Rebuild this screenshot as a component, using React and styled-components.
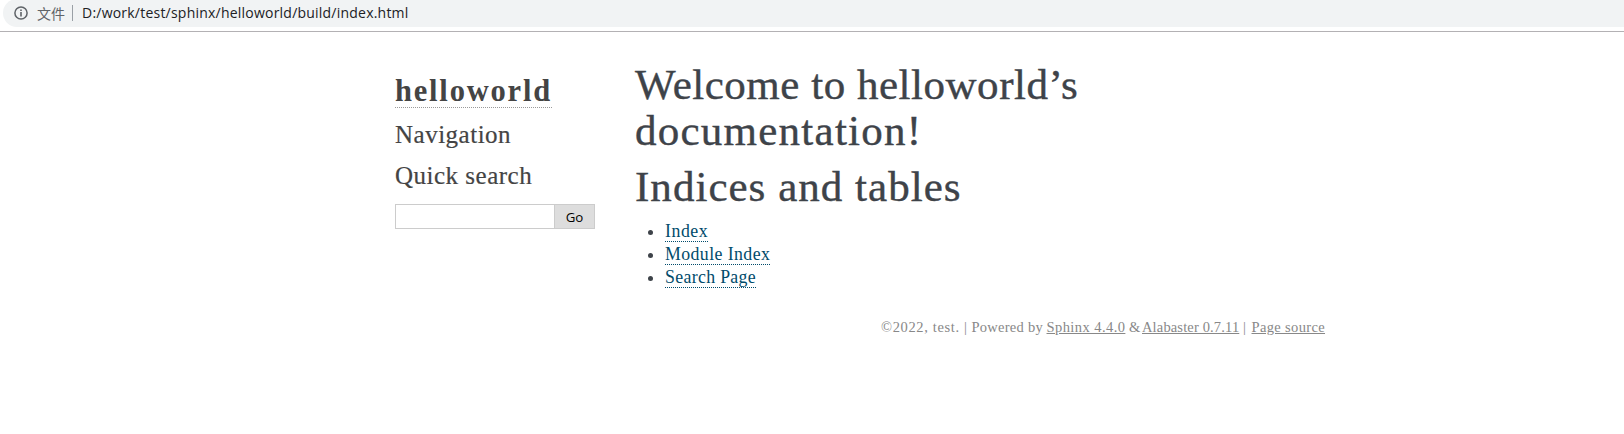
import React from "react";
import styled, { createGlobalStyle } from "styled-components";

const GlobalStyle = createGlobalStyle`
  * { box-sizing: border-box; }
  body { margin: 0; background: #fff; color: #3e4349; font-family: "Liberation Serif", serif; }
`;

const Browser = styled.div`
  height: 434px;
  overflow: hidden;
`;

const Toolbar = styled.header`
  height: 32px;
  padding-left: 3px;
  border-bottom: 1px solid #b3b1b4;
  overflow: hidden;
`;

const AddressBar = styled.div`
  display: flex;
  align-items: center;
  height: 28px;
  margin-top: -1px;
  padding-left: 11px;
  background: #f1f3f4;
  border-radius: 14px 0 0 14px;
  font: 14px/20px "Open Sans", "Noto Sans CJK SC", sans-serif;
`;

const Scheme = styled.span`
  width: 29px;
  margin-left: 9px;
  color: #5f6368;
  font: 400 14px/20px "Noto Sans CJK SC", sans-serif;
`;

const Divider = styled.i`
  width: 1px;
  height: 16px;
  margin: 0 9px 0 6px;
  background: #9aa0a6;
`;

const Url = styled.span`
  color: #202124;
  letter-spacing: 0.22px;
  white-space: nowrap;
`;

const Page = styled.div`
  width: 930px;
  margin-left: 395px;
`;

const Columns = styled.div`
  display: flex;
  height: 285px;
`;

const Sidebar = styled.aside`
  width: 200px;
  margin-right: 40px;
  padding-top: 40px;
  color: #444;
`;

const Logo = styled.a`
  display: block;
  width: 157px;
  height: 36px;
  border-bottom: 1px dotted #999;
  font-size: 30.5px;
  font-weight: 700;
  line-height: 38px;
  letter-spacing: 1.8px;
  white-space: nowrap;
`;

const SideHeading = styled.h3`
  margin: 13px 0 0;
  font-size: 25px;
  font-weight: 400;
  line-height: 28px;
  letter-spacing: 0.5px;
  -webkit-text-stroke: 0.2px;
`;

const SearchForm = styled.form`
  display: flex;
  height: 25px;
  margin-top: 14px;
`;

const SearchInput = styled.input`
  width: 159px;
  padding: 0 5px;
  border: 1px solid #ccc;
  border-right: 0;
  background: #fff;
  outline: 0;
`;

const SearchButton = styled.button`
  width: 41px;
  padding: 0;
  border: 1px solid #ccc;
  border-radius: 0;
  background: #ddd;
  color: #000;
  font: 13.3px/20px "Open Sans", sans-serif;
`;

const Content = styled.main`
  width: 690px;
  padding-top: 30px;
`;

const Title = styled.h1`
  margin: 0 0 10px;
  font-size: 43px;
  font-weight: 400;
  line-height: 46px;
  -webkit-text-stroke: 0.4px;
`;

const Line = styled.span`
  display: block;
  letter-spacing: ${(p) => p.$spacing}px;
`;

const Links = styled.ul`
  margin: 0;
  padding-left: 30px;
  font-size: 17.8px;
  line-height: 23px;
`;

const DocLink = styled.a`
  border-bottom: 1px dotted #004b6b;
  color: #004b6b;
  letter-spacing: ${(p) => p.$spacing}px;
`;

const Footer = styled.footer`
  display: flex;
  justify-content: flex-end;
  color: #888;
  font-size: 14.5px;
  line-height: 20px;
  white-space: pre;
`;

const Phrase = styled.span`
  width: ${(p) => p.$width}px;
  letter-spacing: ${(p) => p.$spacing || 0}px;
`;

const FooterLink = styled.a`
  text-decoration: underline;
`;

const InfoIcon = () => (
  <svg width="14" height="14" viewBox="0 0 14 14">
    <circle cx="7" cy="7" r="6.1" fill="none" stroke="#5f6368" strokeWidth="1.5" />
    <path d="M6.2 3.4h1.6v1.5H6.2zM6.2 6h1.6v4.6H6.2z" fill="#5f6368" />
  </svg>
);

export default function App() {
  return (
    <Browser>
      <GlobalStyle />
      <Toolbar>
        <AddressBar>
          <InfoIcon />
          <Scheme>文件</Scheme>
          <Divider />
          <Url>D:/work/test/sphinx/helloworld/build/index.html</Url>
        </AddressBar>
      </Toolbar>
      <Page>
        <Columns>
          <Sidebar>
            <Logo>helloworld</Logo>
            <SideHeading>Navigation</SideHeading>
            <SideHeading>Quick search</SideHeading>
            <SearchForm>
              <SearchInput type="text" aria-label="Search" />
              <SearchButton type="button">Go</SearchButton>
            </SearchForm>
          </Sidebar>
          <Content>
            <Title>
              <Line $spacing={0.52}>Welcome to helloworld’s</Line>
              <Line $spacing={1.25}>documentation!</Line>
            </Title>
            <Title>
              <Line $spacing={1.03}>Indices and tables</Line>
            </Title>
            <Links>
              <li><DocLink $spacing={0.55}>Index</DocLink></li>
              <li><DocLink $spacing={0.42}>Module Index</DocLink></li>
              <li><DocLink $spacing={0.33}>Search Page</DocLink></li>
            </Links>
          </Content>
        </Columns>
        <Footer>
          <Phrase $width={83} $spacing={0.65}>©2022, test.</Phrase>
          <Phrase $width={7.5}>|</Phrase>
          <Phrase $width={75} $spacing={0.26}>Powered by</Phrase>
          <Phrase $width={82.5} $spacing={0.43}><FooterLink>Sphinx 4.4.0</FooterLink></Phrase>
          <Phrase $width={13}>&amp;</Phrase>
          <Phrase $width={101} $spacing={0.15}><FooterLink>Alabaster 0.7.11</FooterLink></Phrase>
          <Phrase $width={8.5}>|</Phrase>
          <Phrase $width={73.5} $spacing={0.35}><FooterLink>Page source</FooterLink></Phrase>
        </Footer>
      </Page>
    </Browser>
  );
}
